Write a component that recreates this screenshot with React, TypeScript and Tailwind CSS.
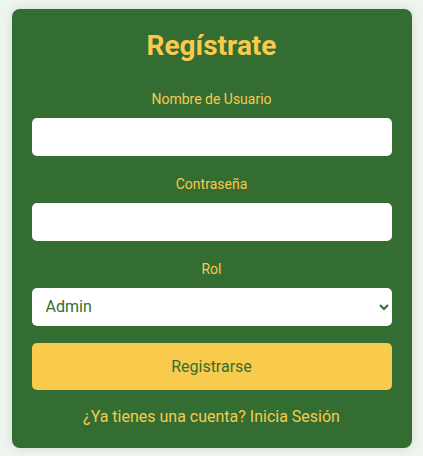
import React from "react";

export default function App() {
  return (
    <div
      className="min-h-[456px] w-full bg-[#eef4ee] flex justify-center pt-[9px]"
      style={{ fontFamily: "Roboto, 'Liberation Sans', sans-serif" }}
    >
      <div className="w-[400px] h-[439px] bg-[#346d32] rounded-[8px] shadow-[0_0_10px_rgba(0,0,0,0.12)] px-[20px] pt-[20px] pb-[20px]">
        <h2 className="text-center text-[28px] leading-[33px] font-bold text-[#f8ca4d] mb-[27px]">
          Regístrate
        </h2>
        <div className="mb-[17.5px]">
          <label className="block text-center text-[14px] leading-[21px] text-[#f8ca4d] mb-[8px]">
            Nombre de Usuario
          </label>
          <input
            type="text"
            className="block w-full h-[38.4px] bg-white rounded-[5px] px-[10px] text-[16px] text-[#346d32] outline-none"
          />
        </div>
        <div className="mb-[17.5px]">
          <label className="block text-center text-[14px] leading-[21px] text-[#f8ca4d] mb-[8px]">
            Contraseña
          </label>
          <input
            type="password"
            className="block w-full h-[38.4px] bg-white rounded-[5px] px-[10px] text-[16px] text-[#346d32] outline-none"
          />
        </div>
        <div className="mb-[17px]">
          <label className="block text-center text-[14px] leading-[21px] text-[#f8ca4d] mb-[8px]">
            Rol
          </label>
          <select
            defaultValue="Admin"
            className="block w-full h-[38.4px] bg-white rounded-[5px] px-[10px] text-[16px] text-[#346d32] outline-none"
            style={{ appearance: "auto" }}
          >
            <option>Admin</option>
            <option>Usuario</option>
          </select>
        </div>
        <button className="block w-full h-[46.7px] bg-[#f8cb4d] rounded-[5px] text-[16px] text-[#346d32]">
          Registrarse
        </button>
        <p className="mt-[15px] text-center text-[16px] leading-[24px] text-[#f8ca4d]">
          ¿Ya tienes una cuenta? Inicia Sesión
        </p>
      </div>
    </div>
  );
}
